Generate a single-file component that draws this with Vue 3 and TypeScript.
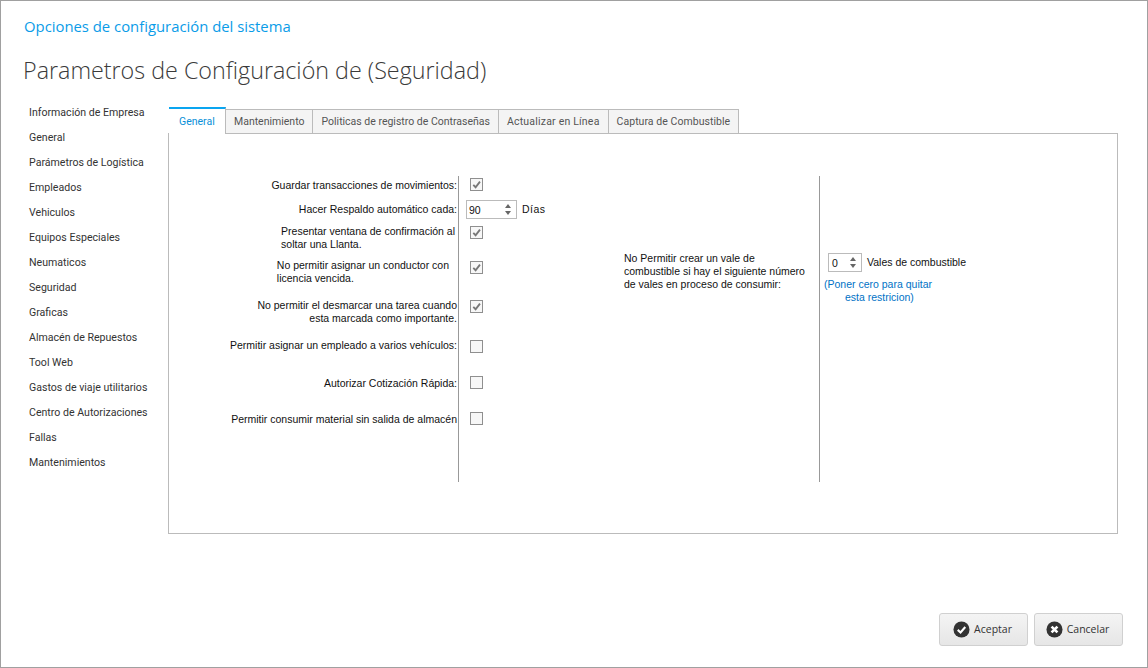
<script setup lang="ts">
const navItems: string[] = ['Información de Empresa','General','Parámetros de Logística','Empleados','Vehiculos','Equipos Especiales','Neumaticos','Seguridad','Graficas','Almacén de Repuestos','Tool Web','Gastos de viaje utilitarios','Centro de Autorizaciones','Fallas','Mantenimientos']
const tabs: string[] = ['General','Mantenimiento','Politicas de registro de Contraseñas','Actualizar en Línea','Captura de Combustible']
</script>

<template>
  <div class="window">
    <h2 class="subtitle">Opciones de configuración del sistema</h2>
    <h1 class="title">Parametros de Configuración de (Seguridad)</h1>
    <div class="body">
      <nav class="nav">
        <div v-for="item in navItems" :key="item" class="nav-item">{{ item }}</div>
      </nav>
      <div class="content">
        <div class="tabs">
          <div v-for="(t, i) in tabs" :key="t" class="tab" :class="{ active: i === 0 }">{{ t }}</div>
        </div>
        <div class="panel">
          <div class="form">
            <div class="col-left">
              <span class="label">Guardar transacciones de movimientos:</span><span class="check on"><svg viewBox="0 0 12 12"><path d="M2.5 6.5 5 9 9.8 2.8" /></svg></span>
              <span class="label spin-label">Hacer Respaldo automático cada:</span>
              <span class="spin-cell"><span class="spinner wide"><span>90</span><span class="arrows"><i class="up"></i><i class="down"></i></span></span><span class="unit dias">Días</span></span>
              <span class="label multi left r3">Presentar ventana de confirmación al<br>soltar una Llanta.</span><span class="check on"><svg viewBox="0 0 12 12"><path d="M2.5 6.5 5 9 9.8 2.8" /></svg></span>
              <span class="label multi left r4">No permitir asignar un conductor con<br>licencia vencida.</span><span class="check on"><svg viewBox="0 0 12 12"><path d="M2.5 6.5 5 9 9.8 2.8" /></svg></span>
              <span class="label multi r5">No permitir el desmarcar una tarea cuando<br>esta marcada como importante.</span><span class="check on"><svg viewBox="0 0 12 12"><path d="M2.5 6.5 5 9 9.8 2.8" /></svg></span>
              <span class="label r6">Permitir asignar un empleado a varios vehículos:</span><span class="check"></span>
              <span class="label">Autorizar Cotización Rápida:</span><span class="check"></span>
              <span class="label">Permitir consumir material sin salida de almacén</span><span class="check"></span>
            </div>
            <div class="col-mid">
              <p>No Permitir crear un vale de<br>combustible si hay el siguiente número<br>de vales en proceso de consumir:</p>
            </div>
            <div class="col-right">
              <div class="vales"><span class="spinner narrow"><span>0</span><span class="arrows"><i class="up"></i><i class="down"></i></span></span><span class="unit">Vales de combustible</span></div>
              <p class="hint">(Poner cero para quitar<br><span class="indent">esta restricion)</span></p>
            </div>
          </div>
        </div>
      </div>
    </div>
    <div class="footer">
      <button class="btn" type="button">
        <svg viewBox="0 0 18 18"><circle cx="9" cy="9" r="8.5" fill="#333" /><path d="M5 9.4 8 12.2 13 6.4" fill="none" stroke="#fff" stroke-width="2.2" /></svg>
        <span>Aceptar</span>
      </button>
      <button class="btn" type="button">
        <svg viewBox="0 0 18 18"><circle cx="9" cy="9" r="8.5" fill="#333" /><path d="M5.9 5.9 12.1 12.1M12.1 5.9 5.9 12.1" fill="none" stroke="#fff" stroke-width="2.8" /></svg>
        <span>Cancelar</span>
      </button>
    </div>
  </div>
</template>

<style>
html, body { margin: 0; background: #fff; }
</style>

<style scoped>
.window {
  width: 1148px;
  height: 668px;
  box-sizing: border-box;
  border: 1px solid #a0a0a0;
  background: #fff;
  display: flex;
  flex-direction: column;
  font-family: "Open Sans", sans-serif;
  color: #222;
  overflow: hidden;
}
.subtitle {
  margin: 15px 0 0 23px;
  font-size: 14.85px;
  line-height: 21px;
  font-weight: 400;
  color: #0a9ce8;
}
.title {
  margin: 15px 0 0 22px;
  font-size: 23.3px;
  line-height: 36px;
  font-weight: 300;
  color: #3a3a3a;
}
.body {
  display: flex;
  margin-top: 12px;
  padding-left: 28px;
}
.nav { width: 139px; }
.nav-item {
  height: 25px;
  line-height: 25px;
  font-family: Roboto, sans-serif;
  font-size: 10.6px;
  color: #333;
  white-space: nowrap;
}
.content { width: 950px; padding-top: 8px; }
.tabs { display: flex; height: 26px; padding-left: 1px; align-items: flex-end; margin-top: -1px; }
.tab {
  box-sizing: border-box;
  height: 24px;
  line-height: 23px;
  padding: 0 8px;
  border: 1px solid #bbb;
  border-bottom: none;
  border-left: none;
  background: #f4f4f4;
  font-family: Roboto, sans-serif;
  font-size: 10.5px;
  color: #555;
  white-space: nowrap;
}
.tab:nth-child(4) { letter-spacing: 0.2px; }
.tab:nth-child(5) { letter-spacing: 0.05px; }
.tab.active {
  width: 57px;
  height: 27px;
  margin-bottom: -1px;
  position: relative;
  z-index: 1;
  line-height: 26px;
  padding: 0 0 0 10px;
  border: none;
  border-top: 2px solid #0aa5f0;
  border-right: 1px solid #bbb;
  background: #fff;
  color: #0a8fd8;
}
.panel {
  box-sizing: border-box;
  height: 401px;
  border: 1px solid #bbb;
  background: #fff;
}
.form {
  display: grid;
  grid-template-columns: 290px 360px auto;
  height: 306px;
  margin-top: 42px;
  font-family: "Liberation Sans", sans-serif;
  font-size: 10.5px;
  color: #111;
}
.col-left {
  border-right: 1px solid #999;
  box-sizing: border-box;
  width: 290px;
  display: grid;
  grid-template-rows: 22px 26px 35px 39px 40px 36px 36px auto;
  grid-template-columns: 288px 1fr;
  padding-top: 2px;
}
.label {
  text-align: right;
  line-height: 13px;
  white-space: nowrap;
  padding-top: 1px;
}
.spin-label { padding-top: 3px; }
.multi { margin-top: -2px; padding-top: 0; }
.left { text-align: left; justify-self: end; }
.r3 { padding-right: 2px; margin-top: -1px; }
.r4 { padding-right: 8px; }
.r5 { margin-top: -1px; }
.r6 { margin-top: -2px; }
.check {
  box-sizing: border-box;
  display: block;
  width: 13px;
  height: 13px;
  margin: 0 0 0 13px;
  border: 1px solid #8f8f8f;
  background: #f7f7f7;
}
.check svg { display: block; width: 11px; height: 11px; }
.check path { fill: none; stroke: #777; stroke-width: 2; }
.spin-cell { display: flex; align-items: center; height: 19px; margin-left: 9px; white-space: nowrap; }
.spinner {
  box-sizing: border-box;
  display: inline-flex;
  flex: none;
  align-items: center;
  justify-content: space-between;
  height: 19px;
  padding: 0 5px 0 2px;
  border: 1px solid #bbb;
  background: #fff;
}
.wide { width: 51px; }
.narrow { width: 34px; padding-left: 3px; }
.arrows { display: flex; flex-direction: column; gap: 3px; }
.arrows i { display: block; width: 0; height: 0; border-left: 3.5px solid transparent; border-right: 3.5px solid transparent; }
.arrows .up { border-bottom: 4px solid #666; }
.arrows .down { border-top: 4px solid #666; }
.unit { margin-left: 5px; line-height: 13px; }
.dias { letter-spacing: 0.5px; }
.col-mid p { margin: 76px 0 0 165px; line-height: 13px; white-space: nowrap; }
.col-right { border-left: 1px solid #999; box-sizing: border-box; padding: 77px 0 0 8px; }
.vales { display: flex; align-items: center; }
.hint { margin: 6px 0 0 -4px; line-height: 13px; color: #0072c6; white-space: nowrap; }
.indent { margin-left: 21px; }
.footer {
  display: flex;
  justify-content: flex-end;
  gap: 6px;
  margin-top: auto;
  padding: 0 24px 21px 0;
}
.btn {
  box-sizing: border-box;
  width: 89px;
  height: 33px;
  display: flex;
  align-items: center;
  justify-content: center;
  gap: 4px;
  padding: 0 2px 0 0;
  border: 1px solid #d0d0d0;
  border-radius: 3px;
  background: linear-gradient(#f4f4f4, #e6e6e6);
  font-family: "Open Sans", sans-serif;
  font-size: 10.5px;
  color: #333;
}
.btn span { margin-top: -2px; }
.btn svg { width: 17px; height: 17px; }
</style>
